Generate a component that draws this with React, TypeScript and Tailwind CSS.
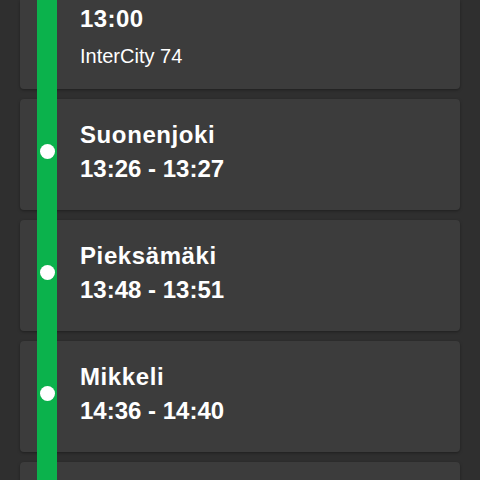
import React from 'react';

type Stop = { name: string; time: string };

const stops: Stop[] = [
  { name: 'Suonenjoki', time: '13:26 - 13:27' },
  { name: 'Pieksämäki', time: '13:48 - 13:51' },
  { name: 'Mikkeli', time: '14:36 - 14:40' },
];

function Card({ children, className = '' }: { children: React.ReactNode; className?: string }) {
  return (
    <div
      className={`flex items-center rounded-[4px] bg-[#3c3c3c] pl-5 shadow-[0_1px_3px_rgba(0,0,0,0.35)] ${className}`}
    >
      {children}
    </div>
  );
}

function Dot() {
  return <div className="relative z-20 -mt-[7px] size-[15px] shrink-0 rounded-full bg-white" />;
}

export default function App() {
  return (
    <div
      className="h-[480px] w-[480px] overflow-hidden bg-[#2f2f2f] text-white"
      style={{ fontFamily: '"Liberation Sans", Arial, sans-serif' }}
    >
      <div className="relative flex flex-col gap-[10px] px-5">
        <div className="absolute bottom-0 left-[37px] top-0 z-10 w-5 bg-[#0bb24c]" />

        <div className="flex h-[89px] flex-col rounded-b-[4px] bg-[#3c3c3c] pl-[60px] shadow-[0_1px_3px_rgba(0,0,0,0.35)]">
          <div className="mt-[2px] text-[24px] font-bold leading-[33px] tracking-[0.4px]">13:00</div>
          <div className="mt-[9px] text-[20px] leading-[24px]">InterCity 74</div>
        </div>

        {stops.map((s) => (
          <Card key={s.name} className="h-[111px]">
            <Dot />
            <div className="-mt-[5px] ml-[25px] flex flex-col text-[24px] font-bold leading-[34px]">
              <span className="tracking-[0.6px]">{s.name}</span>
              <span>{s.time}</span>
            </div>
          </Card>
        ))}

        <Card className="h-[111px]">
          <Dot />
        </Card>
      </div>
    </div>
  );
}
